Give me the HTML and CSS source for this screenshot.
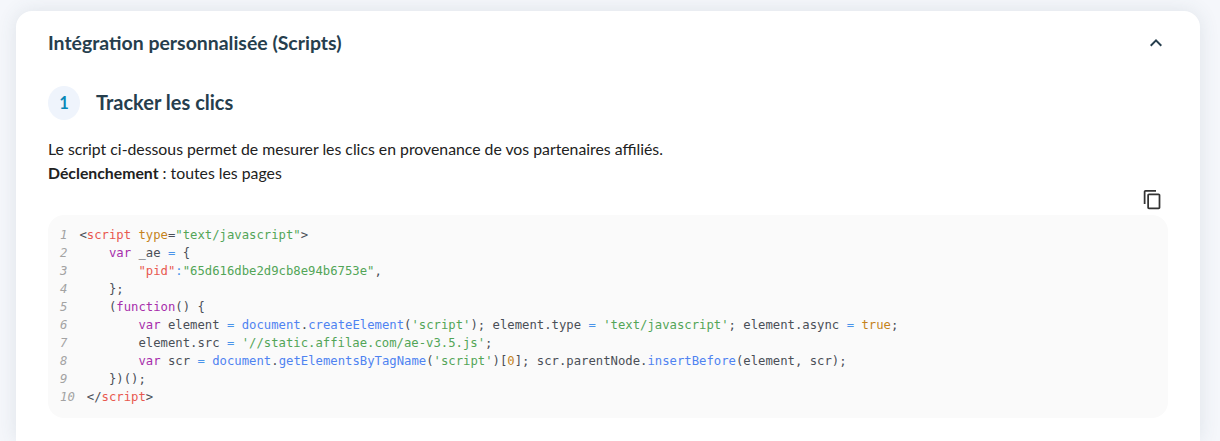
FILE: index.html
```html
<!DOCTYPE html>
<html lang="fr">
<head>
<meta charset="utf-8">
<title>Intégration personnalisée</title>
<link rel="stylesheet" href="styles.css">
</head>
<body>
<section class="card">
  <header class="card-head">
    <h2 class="card-title">Intégration personnalisée (Scripts)</h2>
    <svg class="chevron" width="24" height="24" viewBox="0 0 24 24" aria-hidden="true"><path d="M7.41 15.41 12 10.83l4.59 4.58L18 14l-6-6-6 6z"/></svg>
  </header>
  <div class="step">
    <span class="step-num">1</span>
    <h3 class="step-title">Tracker les clics</h3>
  </div>
  <p class="desc">Le script ci-dessous permet de mesurer les clics en provenance de vos partenaires affiliés.<br><strong>Déclenchement</strong> : toutes les pages</p>
  <div class="copy-row">
    <svg class="copy" width="21" height="21" viewBox="0 0 24 24" aria-hidden="true"><path d="M16 1H4c-1.100 0-2 .9-2 2v14h2V3h12V1zm3 4H8c-1.100 0-2 .9-2 2v14c0 1.100.9 2 2 2h11c1.100 0 2-.9 2-2V7c0-1.100-.9-2-2-2zm0 16H8V7h11v14z"/></svg>
  </div>
  <div class="code">
    <div class="line"><span class="n">1</span><code>&lt;<span class="tag">script</span> <span class="attr">type</span>=<span class="str">"text/javascript"</span>&gt;</code></div>
    <div class="line"><span class="n">2</span><code>    <span class="kw">var</span> _ae <span class="op">=</span> {</code></div>
    <div class="line"><span class="n">3</span><code>        <span class="tag">"pid"</span><span class="op">:</span><span class="str">"65d616dbe2d9cb8e94b6753e"</span>,</code></div>
    <div class="line"><span class="n">4</span><code>    };</code></div>
    <div class="line"><span class="n">5</span><code>    (<span class="kw">function</span>() {</code></div>
    <div class="line"><span class="n">6</span><code>        <span class="kw">var</span> element <span class="op">=</span> <span class="fn">document</span>.<span class="fn">createElement</span>(<span class="str">'script'</span>); element.type <span class="op">=</span> <span class="str">'text/javascript'</span>; element.async <span class="op">=</span> <span class="lit">true</span>;</code></div>
    <div class="line"><span class="n">7</span><code>        element.src <span class="op">=</span> <span class="str">'//static.affilae.com/ae-v3.5.js'</span>;</code></div>
    <div class="line"><span class="n">8</span><code>        <span class="kw">var</span> scr <span class="op">=</span> <span class="fn">document</span>.<span class="fn">getElementsByTagName</span>(<span class="str">'script'</span>)[<span class="lit">0</span>]; scr.parentNode.<span class="fn">insertBefore</span>(element, scr);</code></div>
    <div class="line"><span class="n">9</span><code>    })();</code></div>
    <div class="line"><span class="n">10</span><code>&lt;/<span class="tag">script</span>&gt;</code></div>
  </div>
</section>
</body>
</html>
```
FILE: styles.css
```css
html, body {
  height: 100%;
}
body {
  margin: 0;
  height: 441px;
  overflow: hidden;
  padding: 11px 20px 0 16px;
  box-sizing: border-box;
  background: #f5f7fb;
  font-family: "Lato", sans-serif;
  color: #2a3f4d;
}
.card {
  background: #fff;
  border-radius: 16px 16px 0 0;
  padding: 0 32px;
  height: 430px;
  box-shadow: 0 0 20px rgba(60, 85, 100, 0.12);
}
.card-head {
  display: flex;
  align-items: center;
  justify-content: space-between;
  height: 64px;
}
.card-title {
  margin: -2px 0 0;
  font-size: 19.45px;
  font-weight: 700;
  color: #263e4d;
}
.chevron {
  fill: #263e4d;
}
.step {
  display: flex;
  align-items: center;
  gap: 16px;
  margin-top: 11px;
  height: 34px;
}
.step-num {
  width: 32px;
  height: 34px;
  border-radius: 50%;
  background: #eff4fc;
  color: #0a87b8;
  display: flex;
  align-items: center;
  justify-content: center;
  font-size: 16.5px;
  font-weight: 700;
}
.step-title {
  margin: -2px 0 0;
  font-size: 20px;
  font-weight: 700;
  color: #263e4d;
}
.desc {
  margin: 17px 0 0;
  font-size: 15.8px;
  line-height: 24px;
  color: #212121;
}
.desc strong {
  font-weight: 700;
}
.copy-row {
  display: flex;
  justify-content: flex-end;
  margin-top: 4px;
  padding-right: 5px;
  height: 26px;
}
.copy {
  fill: #333;
  flex: none;
}
.code {
  background: #fafafa;
  border-radius: 16px;
  padding: 11px 12px 12px;
  font-family: "DejaVu Sans Mono", monospace;
  font-size: 12.26px;
  line-height: 18px;
  color: #4a4f57;
}
.line {
  display: flex;
  gap: 12px;
  white-space: pre;
}
.line code {
  font: inherit;
}
.n {
  font-style: italic;
  color: #a3a3a3;
}
.tag { color: #e8584f; }
.attr { color: #c5831c; }
.str { color: #52a557; }
.kw { color: #a72eab; }
.op { color: #4a94ea; }
.fn { color: #4f83f1; }
.lit { color: #c5831c; }
```
